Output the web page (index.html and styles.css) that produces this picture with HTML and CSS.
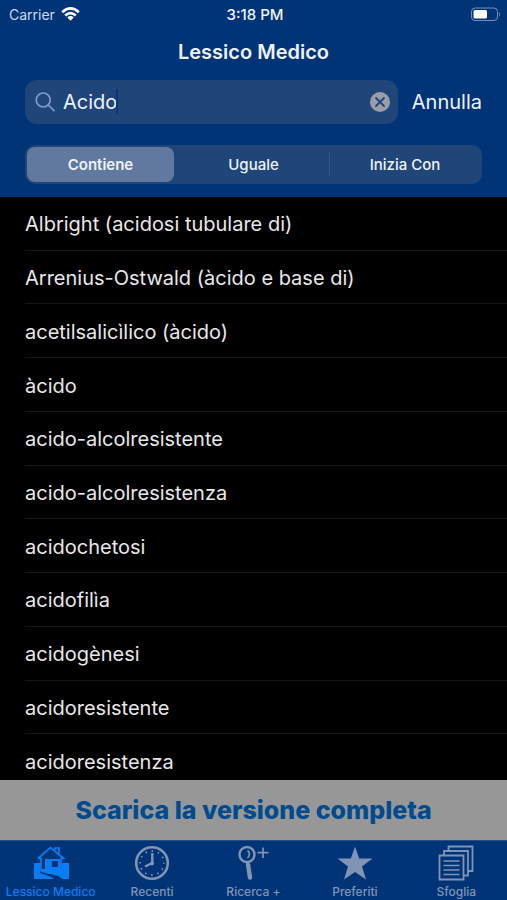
FILE: index.html
```html
<!DOCTYPE html>
<html lang="it">
<head>
<meta charset="utf-8">
<meta name="viewport" content="width=device-width, initial-scale=1">
<title>Lessico Medico</title>
<link rel="stylesheet" href="styles.css">
</head>
<body>
<header class="header">
  <div class="status">
    <div class="carrier">Carrier
      <svg width="19" height="15" viewBox="0 0 19 15" fill="none" stroke="#fff" stroke-width="2.600" aria-hidden="true"><path d="M1.200 5.200Q9.500-2.400 17.800 5.200M4.200 8.500Q9.500 3.600 14.800 8.500"/><path d="M6.300 10.500Q9.500 7.700 12.700 10.500L9.500 13.800Z" fill="#fff" stroke="none"/></svg>
    </div>
    <div class="time">3:18 PM</div>
    <svg class="battery" width="31" height="15" viewBox="0 0 31 15" aria-hidden="true"><rect x="1.500" y="1" width="26" height="12.500" rx="3.500" fill="none" stroke="#7890b5"/><rect x="3.500" y="3" width="13.500" height="8.500" rx="1.500" fill="#fff"/><path d="M29 5Q31 7.200 29 9.500Z" fill="#7890b5"/></svg>
  </div>
  <h1 class="title">Lessico Medico</h1>
  <form class="search">
    <div class="field">
      <svg width="20" height="20" viewBox="0 0 20 20" fill="none" stroke="#7f9ace" stroke-width="1.700" stroke-linecap="round" aria-hidden="true"><circle cx="8.200" cy="8" r="7"/><path d="M13.300 13.200L19 18.700"/></svg>
      <input class="query" type="text" value="Acido" aria-label="Cerca">
      <span class="caret"></span>
      <button class="clear" type="button" aria-label="Cancella testo"><svg width="20" height="20" viewBox="0 0 20 20" aria-hidden="true"><circle cx="10" cy="10" r="10" fill="#9a9ca8"/><path d="M6 6L14 14M14 6L6 14" stroke="#1f4579" stroke-width="1.800" stroke-linecap="round"/></svg></button>
    </div>
    <button class="cancel" type="button">Annulla</button>
  </form>
  <fieldset class="segments" aria-label="Tipo di ricerca">
    <label class="segment"><input type="radio" name="mode" checked><span>Contiene</span></label>
    <label class="segment"><input type="radio" name="mode"><span>Uguale</span></label>
    <label class="segment divided"><input type="radio" name="mode"><span>Inizia Con</span></label>
  </fieldset>
</header>
<main class="results">
  <ul class="list">
    <li>Albright (acidosi tubulare di)</li>
    <li>Arrenius-Ostwald (àcido e base di)</li>
    <li>acetilsalicìlico (àcido)</li>
    <li>àcido</li>
    <li>acido-alcolresistente</li>
    <li>acido-alcolresistenza</li>
    <li>acidochetosi</li>
    <li>acidofilìa</li>
    <li>acidogènesi</li>
    <li>acidoresistente</li>
    <li>acidoresistenza</li>
  </ul>
</main>
<button class="banner" type="button">Scarica la versione completa</button>
<nav class="tabs">
  <a class="tab active" href="#lessico">
    <svg width="36" height="36" viewBox="0 0 36 36" aria-hidden="true"><path d="M1 18H7V24H12V14H18V23H26V18H36V34H29C26 29 17 30 8 27Q18 30 21 34H1Z" fill="currentColor"/><path d="M5 13.500L17.500 2.500L30.500 13.500H28V25M8 24V13.500H5M22 5V3H26V9" fill="none" stroke="currentColor" stroke-width="1.700"/><path d="M18 15H26V23H18Z" fill="#00347a" stroke="currentColor" stroke-width="1.800"/><path d="M7 27Q16 30 24 34" fill="none" stroke="#00347a" stroke-width="1.500"/></svg>
    Lessico Medico</a>
  <a class="tab" href="#recenti">
    <svg width="36" height="36" viewBox="0 0 36 36" fill="none" stroke="currentColor" aria-hidden="true"><circle cx="18" cy="18" r="15.800" stroke-width="2.600"/><circle cx="18" cy="18" r="12" stroke-width="1.800" stroke-dasharray="1.500 4.783" stroke-dashoffset=".75"/><path d="M18.300 8V18L11 21.500" stroke-width="2.400"/><circle cx="18" cy="18.500" r="2" fill="currentColor" stroke="none"/></svg>
    Recenti</a>
  <a class="tab" href="#ricerca">
    <svg width="36" height="36" viewBox="0 0 36 36" fill="none" stroke="currentColor" aria-hidden="true"><circle cx="12" cy="9.500" r="7.500" stroke-width="2.400"/><path d="M12.500 5.500Q16.500 8.500 12.500 13" stroke-width="1.700"/><path d="M13 19.500L15 32.500" stroke-width="4.400" stroke-linecap="round"/><path d="M12.300 16V20" stroke-width="2"/><path d="M28 2.500V13M22.500 7.700H33.500" stroke-width="1.700"/></svg>
    Ricerca +</a>
  <a class="tab" href="#preferiti">
    <svg width="36" height="36" viewBox="0 0 36 36" fill="currentColor" aria-hidden="true"><path d="M18 1.500L22.200 13.500H35.500L25 21.500L29 34.500L18 27L7 34.500L11 21.500L.5 13.500H13.800Z"/></svg>
    Preferiti</a>
  <a class="tab" href="#sfoglia">
    <svg width="36" height="36" viewBox="0 0 36 36" fill="none" stroke="currentColor" stroke-width="1.800" aria-hidden="true"><path d="M1.500 10.500H25.500V34.500H1.500ZM6 10V6H30V30.500H26M10.500 5.500V1.500H34.500V26H30.500"/><path d="M5.500 16H21.500M5.500 20.500H21.500M5.500 25H21.500M5.500 29.500H21.500" stroke-width="1.600"/></svg>
    Sfoglia</a>
</nav>
</body>
</html>
```
FILE: styles.css
```css
* { box-sizing: border-box; }

body {
  margin: 0;
  height: 100vh;
  display: flex;
  flex-direction: column;
  background: #000;
  color: #e8e8e8;
  font-family: Inter, "Liberation Sans", sans-serif;
}

button, input { font: inherit; color: inherit; }
button { padding: 0; border: 0; background: none; cursor: pointer; }

.header {
  background: #003477;
  color: #eef3fb;
  padding-bottom: 13px;
}

.status {
  display: grid;
  grid-template-columns: 1fr auto 1fr;
  align-items: center;
  height: 28px;
  padding: 0 6px 0 9px;
  font-size: 14px;
}
.carrier { display: flex; align-items: center; gap: 6px; color: #ccd9ee; }
.time { font-size: 15px; font-weight: 500; }
.battery { justify-self: end; }

.title {
  margin: 0;
  height: 52px;
  line-height: 48px;
  text-align: center;
  font-size: 20px;
  font-weight: 600;
}

.search {
  display: flex;
  align-items: center;
  gap: 14px;
  margin: 0 25px 21px;
  font-size: 20px;
}
.field {
  position: relative;
  flex: 1;
  min-width: 0;
  display: flex;
  align-items: center;
  gap: 8px;
  height: 44px;
  padding: 0 8px 0 10px;
  border-radius: 12px;
  background: #1f4579;
}
.query {
  flex: 1;
  min-width: 0;
  padding: 0;
  border: 0;
  outline: 0;
  background: none;
}
.caret {
  position: absolute;
  left: 91px;
  top: 9px;
  width: 2px;
  height: 25px;
  background: #06377c;
}
.clear, .clear svg { display: block; }

.segments {
  display: grid;
  grid-template-columns: repeat(3, 1fr);
  height: 39px;
  margin: 0 25px;
  padding: 2px;
  border: 0;
  border-radius: 10px;
  background: #1f4579;
  font-size: 15px;
  font-weight: 500;
}
.segment { position: relative; display: flex; cursor: pointer; }
.segment input { position: absolute; opacity: 0; }
.segment span {
  flex: 1;
  display: flex;
  align-items: center;
  justify-content: center;
  border-radius: 8px;
}
.segment input:checked + span {
  margin-right: 4px;
  background: #62799f;
  font-weight: 600;
}
.divided::before {
  content: "";
  width: 1px;
  margin: 6px 0;
  background: #365786;
}

.results {
  flex: 1;
  min-height: 0;
  overflow: hidden;
  display: flex;
}
.list {
  flex: 1;
  display: grid;
  grid-auto-rows: 1fr;
  margin: 0 0 -8px;
  padding: 0 0 0 25px;
  list-style: none;
  font-size: 20px;
}
.list li {
  display: flex;
  align-items: center;
  min-height: 48px;
  padding-top: 2px;
  border-bottom: 1px solid #161616;
}

.banner {
  height: 60px;
  background: #979797;
  color: #004b8d;
  font-size: 25px;
  font-weight: 800;
}

.tabs {
  display: grid;
  grid-template-columns: repeat(5, 1fr);
  height: 60px;
  background: #003477;
  border-top: 1px solid #244f80;
}
.tab {
  display: flex;
  flex-direction: column;
  align-items: center;
  gap: 3px;
  padding-top: 4px;
  color: #8094b5;
  font-size: 12px;
  font-weight: 500;
  line-height: 16px;
  text-decoration: none;
  white-space: nowrap;
}
.tab svg { flex: none; }
.tab.active { color: #0a7df5; }
```
